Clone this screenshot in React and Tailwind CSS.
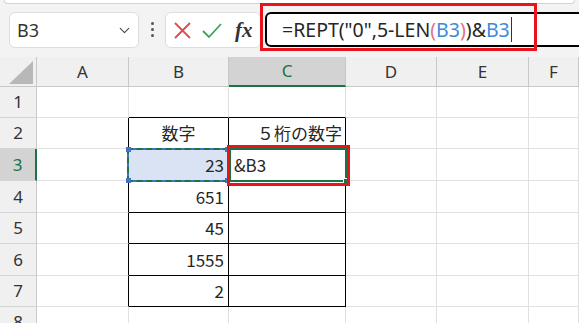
import { ChevronDown } from "lucide-react";

const COLS = [
  { key: "A", w: "w-[92px]" },
  { key: "B", w: "w-[100px]" },
  { key: "C", w: "w-[117px]" },
  { key: "D", w: "w-[91px]" },
  { key: "E", w: "w-[92px]" },
  { key: "F", w: "flex-1" },
];

const ROWS = [
  { n: 1, h: "h-[31px]" },
  { n: 2, h: "h-[31px]" },
  { n: 3, h: "h-[32px]" },
  { n: 4, h: "h-[32px]" },
  { n: 5, h: "h-[31px]" },
  { n: 6, h: "h-[32px]" },
  { n: 7, h: "h-[31px]" },
  { n: 8, h: "h-[31px]" },
];

const values = { 3: "23", 4: "651", 5: "45", 6: "1555", 7: "2" };

function cellBorder(col, row) {
  // right border: black on A (left edge of table), B, C for rows 2-7
  const rightBlack = (col === "A" || col === "B" || col === "C") && row >= 2 && row <= 7;
  // bottom border: black for B/C rows 1..7
  const bottomBlack = (col === "B" || col === "C") && row >= 1 && row <= 7;
  return `${rightBlack ? "border-r-black" : "border-r-[#e1e1e1]"} ${
    bottomBlack ? "border-b-black" : "border-b-[#e1e1e1]"
  }`;
}

function Cell({ col, row }) {
  let content = null;
  let align = "justify-end pr-[4px]";
  if (col === "B" && row === 2) {
    content = "数字";
    align = "justify-center";
  } else if (col === "C" && row === 2) {
    content = "５桁の数字";
    align = "justify-end pr-[3px]";
  } else if (col === "B" && values[row]) {
    content = values[row];
  } else if (col === "C" && row === 3) {
    content = "&B3";
    align = "justify-start pl-[5px]";
  }
  const fill = col === "B" && row === 3 ? "bg-[#dae3f3]" : "bg-white";
  return (
    <div
      className={`${COLS.find((c) => c.key === col).w} flex h-full items-center border-r border-b ${cellBorder(
        col,
        row
      )} ${fill} ${align} text-[17px] text-[#262626]`}
    >
      {content}
    </div>
  );
}

function FormulaBar() {
  return (
    <div className="relative h-[57px] overflow-hidden bg-[#f3f3f3]">
      <div className="mx-[4px] h-[4px] rounded-b-md border border-t-0 border-[#d4d4d4] bg-white" />
      <div className="mt-[8px] flex items-start pl-[9px]">
        <div className="flex h-[36px] w-[130px] shrink-0 items-center justify-between rounded-md border border-[#dddddd] bg-white pl-[7px] pr-[5px] font-['Noto_Sans',sans-serif] text-[18px] text-[#333]">
          <span>B3</span>
          <ChevronDown size={17} strokeWidth={1.6} className="text-[#444]" />
        </div>
        <div className="ml-[12px] mt-[10px] flex shrink-0 flex-col gap-[3px]">
          <span className="h-[3px] w-[3px] rounded-full bg-[#555]" />
          <span className="h-[3px] w-[3px] rounded-full bg-[#555]" />
          <span className="h-[3px] w-[3px] rounded-full bg-[#555]" />
        </div>
        <div className="ml-[11px] flex h-[36px] w-[96px] shrink-0 items-center rounded-md border border-[#dddddd] bg-white pl-[7px]">
          <svg width="19" height="19" viewBox="0 0 19 19">
            <path d="M2 2 L17 17 M17 2 L2 17" stroke="#e5484d" strokeWidth="1.8" />
          </svg>
          <svg width="22" height="19" viewBox="0 0 22 19" className="ml-[9px]">
            <path d="M2 10 L8 16 L20 3" stroke="#3aa655" strokeWidth="1.8" fill="none" />
          </svg>
          <span className="ml-[12px] font-['Liberation_Serif',serif] text-[21px] font-semibold italic leading-none text-[#333]">
            fx
          </span>
        </div>
        <div className="ml-[4px] flex h-[35px] w-[330px] shrink-0 items-center rounded-md border-2 border-black bg-white pl-[15px] font-['Noto_Sans',sans-serif] text-[19.5px] text-[#262626]">
          <span>=REPT("0",5-LEN</span>
          <span className="text-[#e0708a]">(</span>
          <span className="text-[#3b8ad9]">B3</span>
          <span className="text-[#e0708a]">)</span>
          <span>)&amp;</span>
          <span className="text-[#3b8ad9]">B3</span>
          <span className="ml-[1px] h-[25px] w-[1px] bg-[#333]" />
        </div>
      </div>
      <div className="absolute left-[260px] top-[3px] h-[48px] w-[277px] border-[3px] border-[#e8141b]" />
    </div>
  );
}

export default function App() {
  return (
    <div className="relative h-[323px] w-[579px] overflow-hidden bg-white font-['Noto_Sans_CJK_JP',sans-serif]">
      <FormulaBar />
      {/* column headers */}
      <div className="flex h-[30px] bg-[#f0f0f0] font-['Noto_Sans',sans-serif] text-[17px] text-[#333]">
        <div className="relative w-[37px] border-r border-b border-[#c8c8c8]">
          <svg className="absolute left-[9px] top-[4px]" width="24" height="23" viewBox="0 0 24 23">
            <polygon points="24,0 24,23 0,23" fill="#b8b8b8" />
          </svg>
        </div>
        {COLS.map((c) => (
          <div
            key={c.key}
            className={`${c.w} flex items-center justify-center border-r ${
              c.key === "C"
                ? "border-r-[#c8c8c8] border-b-2 border-b-[#1e7145] bg-[#d3d3d3] text-[#1e7145]"
                : "border-b border-[#c8c8c8]"
            }`}
          >
            {c.key}
          </div>
        ))}
      </div>
      {/* rows */}
      {ROWS.map((r) => (
        <div key={r.n} className={`flex ${r.h}`}>
          <div
            className={`flex w-[37px] items-center justify-center border-b border-[#d4d4d4] font-['Noto_Sans',sans-serif] text-[17px] ${
              r.n === 3
                ? "border-r-2 border-r-[#1e7145] bg-[#d3d3d3] text-[#1e7145]"
                : "border-r border-r-[#c8c8c8] bg-[#f0f0f0] text-[#333]"
            }`}
          >
            {r.n}
          </div>
          {COLS.map((c) => (
            <Cell key={c.key} col={c.key} row={r.n} />
          ))}
        </div>
      ))}
      {/* B3 reference / copy marquee */}
      <div className="absolute left-[127px] top-[148px] h-[34px] w-[102px] border-2 border-[#4472c4]">
        <div className="absolute inset-[-2px] border-2 border-dashed border-[#1e7145]" />
        <span className="absolute left-[-3px] top-[-3px] h-[5px] w-[5px] bg-[#4472c4]" />
        <span className="absolute right-[-3px] top-[-3px] h-[5px] w-[5px] bg-[#4472c4]" />
        <span className="absolute bottom-[-3px] left-[-3px] h-[5px] w-[5px] bg-[#4472c4]" />
        <span className="absolute bottom-[-3px] right-[-3px] h-[5px] w-[5px] bg-[#4472c4]" />
      </div>
      {/* C3 active cell */}
      <div className="absolute left-[229px] top-[148px] h-[34px] w-[118px] border-2 border-[#1e7145]">
        <span className="absolute bottom-[-4px] right-[-4px] h-[6px] w-[6px] border border-white bg-[#1e7145]" />
      </div>
      <div className="absolute left-[227px] top-[145px] h-[41px] w-[123px] border-[3px] border-[#e8141b]" />
    </div>
  );
}
